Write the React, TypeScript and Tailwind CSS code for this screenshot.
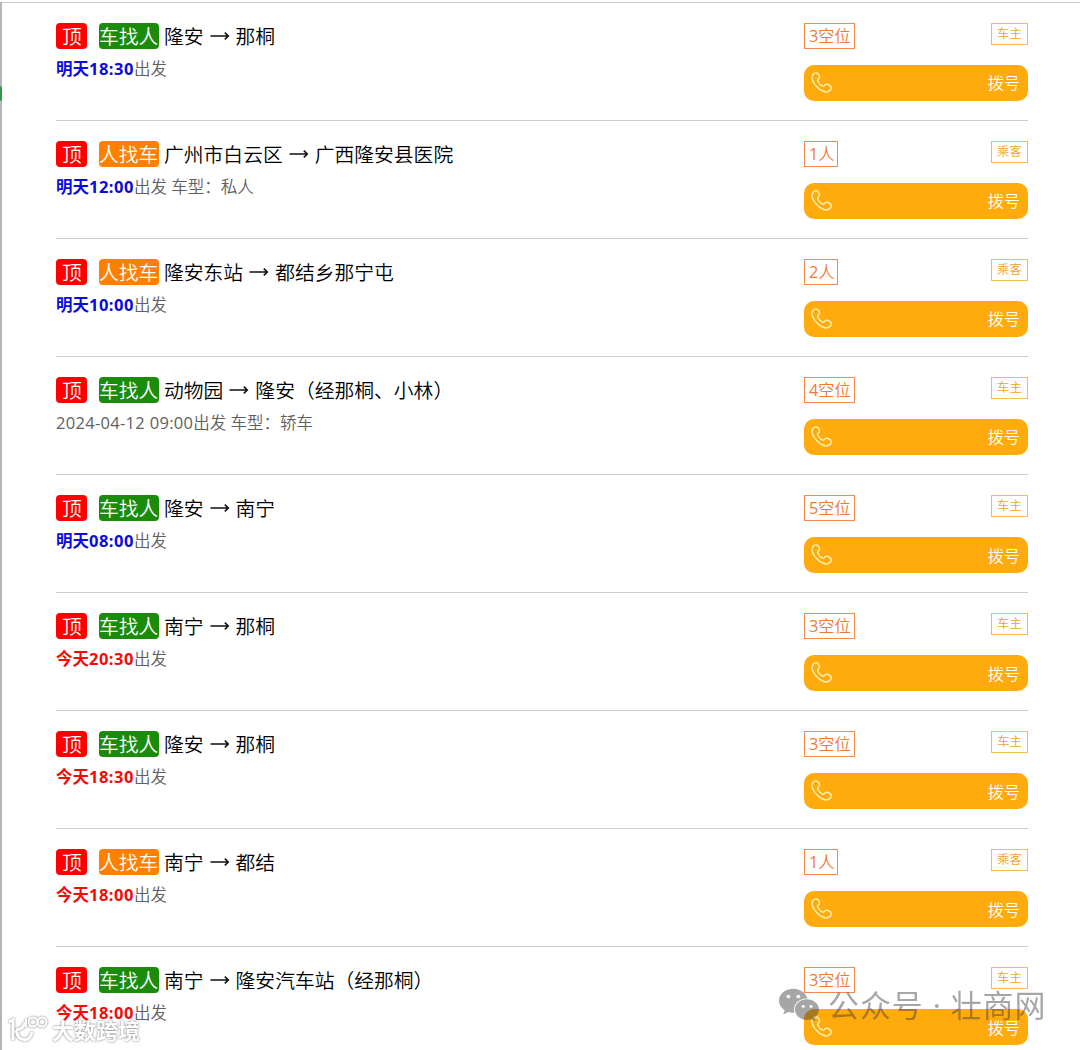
import { FaWeixin } from "react-icons/fa";

type Ride = {
	kind: "车找人" | "人找车";
	from: string;
	to: string;
	day?: "明天" | "今天";
	time: string;
	extra?: string;
	seats: number;
};

const rides: Ride[] = [
	{ kind: "车找人", from: "隆安", to: "那桐", day: "明天", time: "18:30", seats: 3 },
	{ kind: "人找车", from: "广州市白云区", to: "广西隆安县医院", day: "明天", time: "12:00", extra: "车型：私人", seats: 1 },
	{ kind: "人找车", from: "隆安东站", to: "都结乡那宁屯", day: "明天", time: "10:00", seats: 2 },
	{ kind: "车找人", from: "动物园", to: "隆安（经那桐、小林）", time: "2024-04-12 09:00", extra: "车型：轿车", seats: 4 },
	{ kind: "车找人", from: "隆安", to: "南宁", day: "明天", time: "08:00", seats: 5 },
	{ kind: "车找人", from: "南宁", to: "那桐", day: "今天", time: "20:30", seats: 3 },
	{ kind: "车找人", from: "隆安", to: "那桐", day: "今天", time: "18:30", seats: 3 },
	{ kind: "人找车", from: "南宁", to: "都结", day: "今天", time: "18:00", seats: 1 },
	{ kind: "车找人", from: "南宁", to: "隆安汽车站（经那桐）", day: "今天", time: "18:00", seats: 3 },
];

function PhoneIcon() {
	return (
		<svg className="w-[21px] h-[21px] mt-[-1px]" viewBox="0 0 21 21" fill="none" stroke="#fff0b0" strokeWidth="1.5" strokeLinejoin="round">
			<path d="M2.2 2.2C3.6.6 5.5.4 6.9 1.8C8.3 3.2 8.9 4.8 8.2 6C7.4 7.2 6.1 7.4 6.7 8.7C7.6 10.8 9.8 13.3 11.8 14.1C13.1 14.6 13.4 13 14.7 12.4C16.2 11.8 18.1 12.7 19.3 13.9C20.6 15.2 20.4 17 19 18.4C17.4 20 15 20.4 12.3 19.3C7.6 17.4 2.8 12.2 1.2 7.5C.5 5.3.8 3.7 2.2 2.2Z" />
		</svg>
	);
}

function Arrow() {
	return (
		<svg className="w-[20px] h-[12px] mx-[6px] mt-[-1px]" viewBox="0 0 20 12" fill="none" stroke="#111" strokeWidth="1.6">
			<path d="M0.5 6H18M14.8 2.6L18.3 6L14.8 9.4" />
		</svg>
	);
}

function RideRow({ ride }: { ride: Ride }) {
	const isCar = ride.kind === "车找人";
	return (
		<li className="flex justify-between h-[118.05px] pt-[20px] border-b border-[#cfcfcf]">
			<div>
				<div className="flex items-center h-[26px] text-[19.8px] leading-[28px] whitespace-nowrap text-black">
					<span className="w-[31px] h-[26px] pl-[6px] rounded-[4px] bg-[#fe0000] text-white">顶</span>
					<span className={isCar ? "ml-[12px] w-[60px] h-[26px] rounded-[4px] bg-[#1a8c0a] text-white" : "ml-[12px] w-[60px] h-[26px] rounded-[4px] bg-[#ff8000] text-white"}>{ride.kind}</span>
					<span className="ml-[5px] mt-[2px]">{ride.from}</span>
					<Arrow />
					<span className="mt-[2px]">{ride.to}</span>
				</div>
				<div className="mt-[8px] text-[16.5px] leading-[24px] text-[#606060] whitespace-nowrap">
					{ride.day ? (
						<b className={ride.day === "明天" ? "font-bold text-[#0a0ae0]" : "font-bold text-[#f50a0a]"}>
							{ride.day}
							<span className="tracking-[0.5px]">{ride.time}</span>
						</b>
					) : (
						<span className="font-normal tracking-[0.3px]">{ride.time}</span>
					)}
					出发{ride.extra && " " + ride.extra}
				</div>
			</div>
			<div className="w-[224px]">
				<div className="flex items-start justify-between">
					<span className="h-[26px] pl-[4px] pr-[3px] border border-[#f28a4a] text-[#ef7a35] text-[16.2px] leading-[24px]">
						<span className="font-normal">{ride.seats}</span>
						{isCar ? "空位" : "人"}
					</span>
					<span className="w-[37px] h-[22px] border border-[#f5bd4e] text-[#eda42c] text-[12.4px] leading-[20px] text-center">{isCar ? "车主" : "乘客"}</span>
				</div>
				<button className="mt-[16px] flex items-center justify-between w-full h-[36px] pl-[7px] pr-[8px] rounded-[10px] bg-[#ffaa0d] text-white text-[16.2px]">
					<PhoneIcon />
					<span className="mt-[1px]">拨号</span>
				</button>
			</div>
		</li>
	);
}

export default function App() {
	return (
		<div className="relative w-[1080px] h-[1050px] overflow-hidden bg-white font-['Open_Sans','Noto_Sans_CJK_SC',sans-serif] font-[350]">
			<div className="h-full border-l-2 border-[#b5b5b5]">
				<ul className="h-full border-t border-[#cccccc] mt-[2px] pl-[54px] pr-[52px]">
					{rides.map((ride, i) => (
						<RideRow key={i} ride={ride} />
					))}
				</ul>
			</div>
			<span className="absolute left-0 top-[86px] w-[2px] h-[15px] rounded-r-full bg-[#2c9a48]" />

			<div className="absolute left-[778px] top-[984px] flex items-center text-[#3c3c3c] opacity-45">
				<FaWeixin className="w-[42px] h-[42px]" />
				<span className="ml-[8px] text-[31px] leading-[42px] tracking-[0.9px] font-normal whitespace-nowrap">公众号 · 壮商网</span>
			</div>

			<div className="absolute left-[8px] top-[1013px] flex items-center text-white drop-shadow-[0_0_1px_#777]">
				<svg className="w-[41px] h-[30px]" viewBox="0 0 41 30" fill="none" stroke="#fff" strokeWidth="3">
					<path d="M1 8L5 6V26M8 16Q16 15 17 8M8 16C10 28 22 29 24 18" />
					<path d="M18 5V13" strokeWidth="2" />
					<circle cx="25" cy="8" r="4.5" strokeWidth="2" />
					<circle cx="34" cy="8" r="4.5" strokeWidth="2" />
				</svg>
				<span className="ml-[3px] mt-[2px] text-[22px] leading-[30px] font-bold whitespace-nowrap">大数跨境</span>
			</div>
		</div>
	);
}
